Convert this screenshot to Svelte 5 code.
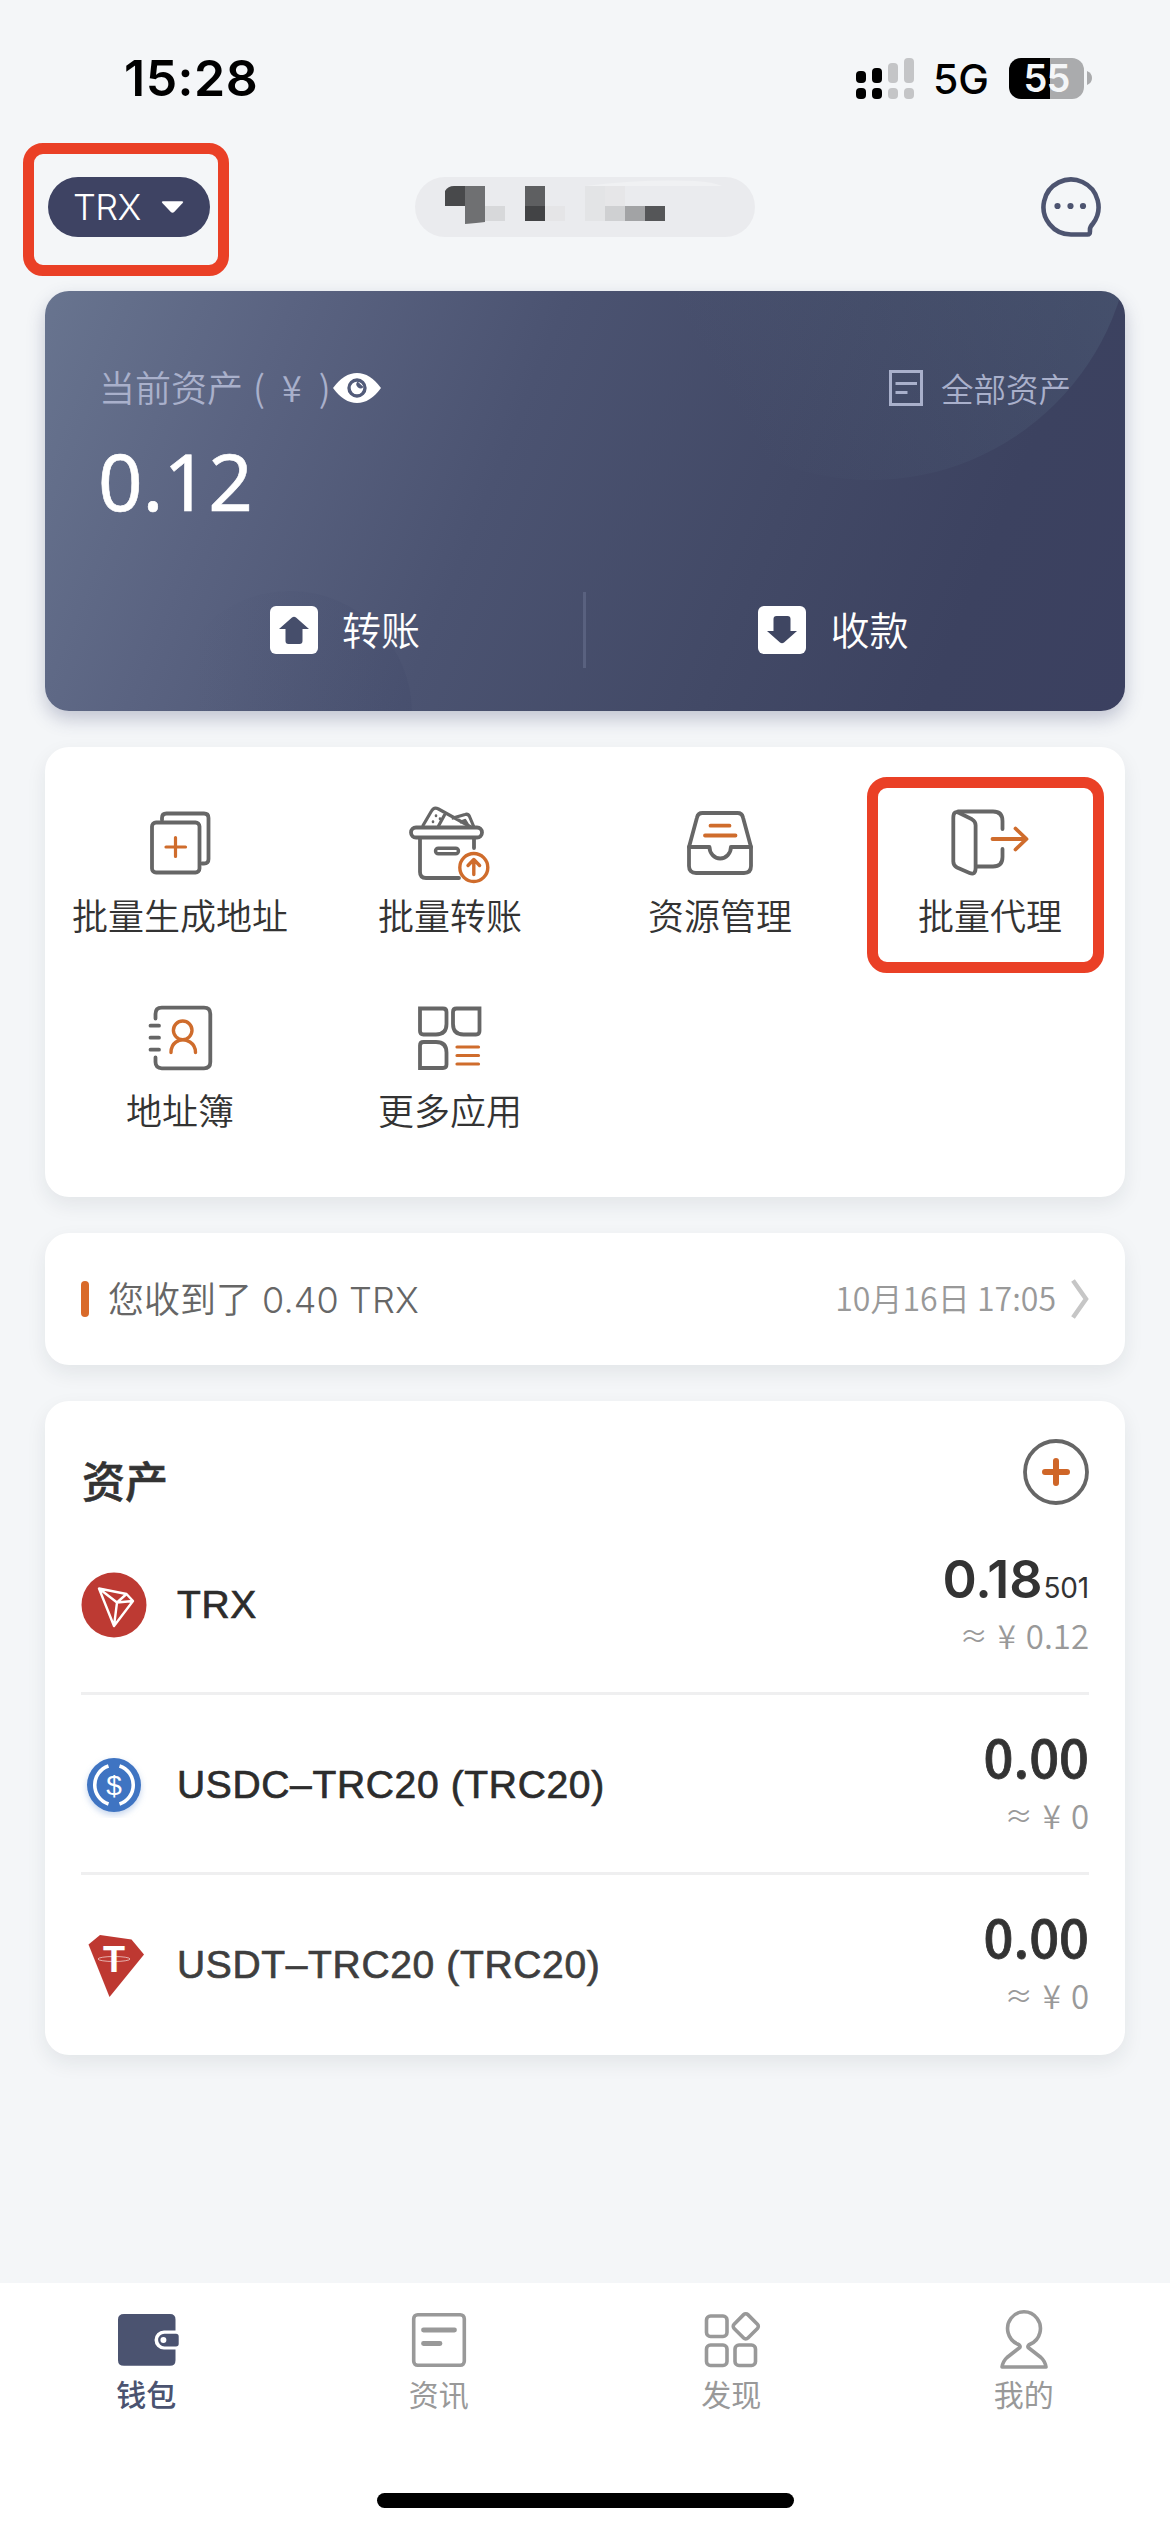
<script lang="ts">
	type Asset = { id: string; name: string; amount: string; rest: string; value: string };

	const tools = [
		{ id: 'generate', name: '批量生成地址' },
		{ id: 'transfer', name: '批量转账' },
		{ id: 'resource', name: '资源管理' },
		{ id: 'proxy', name: '批量代理', marked: true },
		{ id: 'contacts', name: '地址簿' },
		{ id: 'more', name: '更多应用' }
	];

	const assets: Asset[] = [
		{ id: 'trx', name: 'TRX', amount: '0.18', rest: '501', value: '0.12' },
		{ id: 'usdc', name: 'USDC–TRC20 (TRC20)', amount: '0.00', rest: '', value: '0' },
		{ id: 'usdt', name: 'USDT–TRC20 (TRC20)', amount: '0.00', rest: '', value: '0' }
	];

	const tabs = [
		{ id: 'wallet', name: '钱包' },
		{ id: 'news', name: '资讯' },
		{ id: 'discover', name: '发现' },
		{ id: 'mine', name: '我的' }
	];

	let active = $state('wallet');
</script>

<div class="screen">
	<div class="status">
		<span class="time">15:28</span>
		<div class="indicators">
			<svg class="signal" viewBox="0 0 58 41">
				<g fill="#000">
					<rect x="0" y="13" width="10" height="12" rx="4" />
					<rect x="16" y="10" width="10" height="15" rx="4" />
					<rect x="0" y="30" width="10" height="11" rx="4" />
					<rect x="16" y="30" width="10" height="11" rx="4" />
				</g>
				<g fill="#c4c5c7">
					<rect x="32" y="5" width="10" height="20" rx="4" />
					<rect x="48" y="0" width="10" height="25" rx="4" />
					<rect x="32" y="30" width="10" height="11" rx="4" />
					<rect x="48" y="30" width="10" height="11" rx="4" />
				</g>
			</svg>
			<span class="network">5G</span>
			<div class="battery">
				<span>55</span>
			</div>
			<svg class="tip" viewBox="0 0 5 14"><path d="M0 0q5 2 5 7t-5 7z" fill="#aaabad" /></svg>
		</div>
	</div>

	<header>
		<div class="chain">
			<span>TRX</span>
			<svg viewBox="0 0 24 14"><path d="M2 1h20q2 0 .6 1.800L14 12q-2 2-4 0L1.400 2.800Q0 1 2 1z" fill="#fff" /></svg>
			<i class="mark mark-chain"></i>
		</div>
		<div class="account">
			<svg viewBox="0 0 340 60">
				<path d="M170 9q60-7 110-5 18 1 27 5z" fill="#f0f1f3" />
				<path d="M30 29V14q3-5 9-5h11v20z" fill="#48494b" />
				<path d="M50 9h20v36q-8 1-20 2z" fill="#6f7072" />
				<rect x="70" y="29" width="20" height="15" fill="#d7d8da" />
				<rect x="110" y="9" width="20" height="20" fill="#5e5f61" />
				<rect x="110" y="29" width="20" height="15" fill="#424345" />
				<rect x="130" y="29" width="20" height="15" fill="#e5e5e7" />
				<rect x="170" y="9" width="20" height="35" fill="#e3e4e6" />
				<rect x="190" y="9" width="20" height="20" fill="#e6e6e8" />
				<rect x="190" y="29" width="20" height="15" fill="#cfd0d2" />
				<rect x="210" y="29" width="20" height="15" fill="#a2a3a5" />
				<rect x="230" y="29" width="20" height="15" fill="#555658" />
			</svg>
		</div>
		<svg class="chat" viewBox="0 0 60 60">
			<path
				d="M30 57.500A27.500 27.500 0 1 1 52 46.500Q48.500 50 49 54 49 57.500 46.500 57.500Z"
				fill="none"
				stroke="#4d5470"
				stroke-width="4.600"
			/>
			<g fill="#4d5470">
				<circle cx="16.500" cy="29" r="3.100" />
				<circle cx="29.500" cy="29" r="3.100" />
				<circle cx="42" cy="29" r="3.100" />
			</g>
		</svg>
	</header>

	<main>
		<section class="balance">
			<div class="balance-top">
				<span class="label">当前资产<b>(</b><b>¥</b><b>)</b></span>
				<svg class="eye" viewBox="0 0 48 30">
					<path d="M0 15Q11 0 24 0T48 15Q37 30 24 30T0 15z" fill="#fff" />
					<circle cx="24" cy="15" r="8" fill="#fff" stroke="#525b79" stroke-width="3.400" />
					<path d="M24.500 8.500a4 4 0 0 0 6 5.500" fill="#525b79" />
				</svg>
				<span class="all">
					<svg viewBox="0 0 34 36" fill="none" stroke="#a9b0cb" stroke-width="3">
						<path d="M1.500 1.500h31v33h-31zM6.500 13.500h21.500M6.500 22.500h12" />
					</svg>
					<span>全部资产</span>
				</span>
			</div>
			<div class="total">0.12</div>
			<div class="actions">
				<div class="action">
					<svg viewBox="0 0 48 48">
						<rect width="48" height="48" rx="6" fill="#fff" />
						<path d="M22 11.500q2-1.500 4 0L39 23h-6.500v12q0 3-3 3h-11q-3 0-3-3V23H9z" fill="#464e6b" />
					</svg>
					<span>转账</span>
				</div>
				<div class="action">
					<svg viewBox="0 0 48 48">
						<rect width="48" height="48" rx="6" fill="#fff" />
						<path d="M22 36.500q2 1.500 4 0L39 25h-6.500V13q0-3-3-3h-11q-3 0-3 3v12H9z" fill="#3f4662" />
					</svg>
					<span>收款</span>
				</div>
			</div>
		</section>

		<section class="card tools">
			{#each tools as tool (tool.id)}
				<div class="tool">
					<svg viewBox="0 0 90 90" fill="none" stroke="#666" stroke-width="3.800" stroke-linecap="round" stroke-linejoin="round">
						{#if tool.id === 'generate'}
							<rect x="17" y="24.500" width="47.500" height="50" rx="4" />
							<path d="M27 22v-2q0-4.500 4.500-4.500H69q4.500 0 4.500 4.500v41q0 4.500-4.500 4.500h-2" />
							<path d="M40.500 39.500v19M31 49h19.500" stroke="#cf6c2c" stroke-width="3.200" />
						{:else if tool.id === 'transfer'}
							<path d="M18 27.500 26.500 13q2.500-4.500 7-2L65 28.500M39.500 17 33.500 28M48 20l12-3.500q3-1 4.500 2L68.500 28M56 24l4-1.500 2.500 4" stroke-width="3.200" />
							<path d="M31 17.500v.5M28 23.500v.5M35 20.500v.500" stroke-width="2.600" />
							<rect x="6" y="29.500" width="71" height="10" rx="5" />
							<path d="M15 40v34q0 6 6 6h33M69 40v10" />
							<rect x="30.500" y="50.200" width="23" height="5.600" rx="2.800" stroke-width="3.400" />
							<g stroke="#cf6c2c" stroke-width="3.400">
								<circle cx="68.800" cy="69.500" r="14" />
								<path d="M68.800 76.500v-14M63 67.500l5.800-6 5.800 6" />
							</g>
						{:else if tool.id === 'resource'}
							<path d="M14 49 22 19.500Q23 15 27.500 15h35q4.500 0 5.500 4.500L76 49v19q0 7-7 7H21q-7 0-7-7z" />
							<path d="M14 49h20.500a10.700 11.500 0 0 0 21.400 0H76" />
							<path d="M35.500 27.700h19M30 37.500h30.500" stroke="#cf6c2c" />
						{:else if tool.id === 'proxy'}
							<path d="M8.300 20q0-8 6-5L27 21.300q3.600 2 3.600 6V70q0 7.500-6 5L12 69.500q-3.700-2-3.700-6z" />
							<path d="M13 13.500h35q9.500 0 9.500 9.500v8M57.500 51v8q0 9.500-9.500 9.500H32" />
							<path d="M47.500 41H81M70.500 30.500l11 10.500-11 10.500" stroke="#cf6c2c" />
						{:else if tool.id === 'contacts'}
							<path d="M20.500 25.500V21q0-6.300 6.300-6.300H69q6.300 0 6.300 6.300v48q0 6.300-6.300 6.300H26.800q-6.300 0-6.300-6.300v-4.500" />
							<path d="M15.500 32.700h8.500M15.500 44.700h8.500M15.500 56.700h8.500" />
							<g stroke="#cf6c2c" stroke-width="3.400">
								<circle cx="47.700" cy="37.300" r="9.300" />
								<path d="M36 59.500q0-7 5-10.500 6.700-4.500 14 0 5.500 3.500 5.500 10.500" />
							</g>
						{:else}
							<path stroke-linejoin="miter" d="M15 15.500h23q3.500 0 3.500 3.500v12Q41.500 41.500 31 41.500H18.500q-3.500 0-3.500-3.500z" />
							<path stroke-linejoin="miter" d="M74.500 15.500h-23q-3.500 0-3.500 3.500v12Q48 41.500 58.500 41.500H71q3.500 0 3.500-3.500z" />
							<path stroke-linejoin="miter" d="M15 75h23q3.500 0 3.500-3.500v-12Q41.500 49 31 49H18.500q-3.500 0-3.500 3.500z" />
							<path d="M52 54h21.500M52 62.500h21.500M52 71h21.500" stroke="#cf6c2c" stroke-width="3.200" />
						{/if}
					</svg>
					<span>{tool.name}</span>
					{#if tool.marked}<i class="mark mark-tool"></i>{/if}
				</div>
			{/each}
		</section>

		<section class="card notice">
			<i class="bar"></i>
			<span class="message">您收到了 <em>0.40 TRX</em></span>
			<span class="date">10月16日 17:05</span>
			<svg viewBox="0 0 18 40"><path d="M2 1.500 15 20 2 38.500" fill="none" stroke="#c6c6c6" stroke-width="4.500" /></svg>
		</section>

		<section class="card assets">
			<div class="assets-head">
				<h2>资产</h2>
				<svg viewBox="0 0 66 66" fill="none">
					<circle cx="33" cy="33" r="31" stroke="#666" stroke-width="3.800" />
					<path d="M33 22v22M22 33h22" stroke="#cf6628" stroke-width="6" stroke-linecap="round" />
				</svg>
			</div>
			{#each assets as asset (asset.id)}
				<div class="asset">
					<svg class="coin" viewBox="0 0 66 66">
						{#if asset.id === 'trx'}
							<circle cx="33" cy="33" r="32.500" fill="#bd3a33" />
							<path
								d="M18 16.500 45.500 22 52 29 33 54zM18 16.500l18 14L33 54M36 30.500 52 29M36 30.500 45.500 22"
								fill="none"
								stroke="#fff"
								stroke-width="2.400"
								stroke-linejoin="round"
							/>
						{:else if asset.id === 'usdc'}
							<circle class="glow" cx="33" cy="33" r="27" fill="#3f74c2" />
							<path d="M27.500 14a20 20 0 0 0 0 38M38.500 14a20 20 0 0 1 0 38" fill="none" stroke="#fff" stroke-width="3.600" />
							<text x="33" y="43" font-size="28">$</text>
						{:else}
							<g transform="translate(0 3)">
								<path d="M19 0 50.500 4.500 63 19.500 28.500 62 7.500 9.500z" fill="#be3831" />
								<ellipse cx="33" cy="24" rx="16" ry="2.500" fill="none" stroke="#fff" stroke-width=".6" />
								<text class="tether" x="33" y="37" font-size="36">T</text>
							</g>
						{/if}
					</svg>
					<span class="name" class:soft={asset.id === 'usdt'}>{asset.name}</span>
					<div class="worth">
						<div class="amount" class:split={asset.rest}>{asset.amount}{#if asset.rest}<small>{asset.rest}</small>{/if}</div>
						<div class="value"><i>≈</i><span>¥</span>{asset.value}</div>
					</div>
				</div>
			{/each}
		</section>
	</main>

	<nav>
		{#each tabs as tab (tab.id)}
			<button class:active={active === tab.id} onclick={() => (active = tab.id)}>
				<svg viewBox="0 0 66 66" fill="none" stroke="#999" stroke-width="3.600" stroke-linejoin="round">
					{#if tab.id === 'wallet'}
						<g stroke="none" fill="#4b5370">
							<path d="M11 7h46q5.500 0 5.500 5.500V23.500H51a9.500 9.500 0 0 0 0 19h11.500v10.700q0 5.500-5.500 5.500H11q-6 0-6-5.500V12.500Q5 7 11 7z" />
							<path fill-rule="evenodd" d="M51.500 26.700H63q2.700 0 2.700 2.700v7.400q0 2.700-2.700 2.700H51.500a6.400 6.400 0 0 1 0-12.800zM50.400 30a3 3 0 1 0 0 6 3 3 0 0 0 0-6z" />
						</g>
					{:else if tab.id === 'news'}
						<rect x="7.700" y="7.700" width="50.600" height="50.600" rx="4" />
						<path d="M17.500 23h31M17.500 36.500h16.500" stroke-width="4.800" stroke-linecap="round" />
					{:else if tab.id === 'discover'}
						<rect x="8.500" y="9" width="20.500" height="20.500" rx="4" />
						<rect x="8.500" y="38" width="20.500" height="20.500" rx="4" />
						<rect x="37" y="38" width="20.500" height="20.500" rx="4" />
						<rect x="38" y="9.500" width="19.500" height="19.500" rx="3" transform="rotate(45 47.700 19.300)" />
					{:else}
						<path d="M28.800 40.500Q30 38.500 26.500 37A16.400 16.800 0 1 1 39.500 37Q36 38.500 37.200 40.500L50 50.500q4 3.500 5 9.500H11q1-6 5-9.500z" />
					{/if}
				</svg>
				{tab.name}
			</button>
		{/each}
		<i class="home"></i>
	</nav>
</div>

<style>
	:global(body) {
		margin: 0;
		background: #f4f6f8;
	}

	.screen {
		width: 1170px;
		height: 2532px;
		display: flex;
		flex-direction: column;
		overflow: hidden;
		background: #f4f6f8;
		color: #333;
		font-family: 'Noto Sans CJK SC', sans-serif;
		font-weight: 350;
	}

	svg {
		display: block;
		flex: none;
	}

	.status {
		height: 156px;
		box-sizing: border-box;
		padding: 0 78px 0 124px;
		display: flex;
		align-items: center;
		justify-content: space-between;
		color: #000;
		font-family: Inter, sans-serif;
	}

	.time {
		font-size: 50px;
		font-weight: 600;
		letter-spacing: 0.5px;
	}

	.indicators {
		display: flex;
		align-items: center;
	}

	.signal {
		width: 58px;
		height: 41px;
		margin-right: 19px;
	}

	.network {
		width: 76px;
		font-size: 41px;
		font-weight: 450;
		margin-top: 2px;
	}

	.battery {
		width: 75px;
		height: 41px;
		border-radius: 12px;
		display: flex;
		align-items: center;
		justify-content: center;
		background: linear-gradient(90deg, #000 41px, #aaabad 41px);
		color: #f4f6f8;
		font-size: 38px;
		font-weight: 600;
		letter-spacing: -1px;
	}

	.tip {
		width: 5px;
		height: 14px;
		margin-left: 3px;
	}

	header {
		height: 135px;
		box-sizing: border-box;
		padding: 21px 0 0 48px;
		display: grid;
		grid-template-columns: 367px 626px 60px;
		justify-content: start;
		align-items: start;
	}

	.chain {
		position: relative;
		width: 162px;
		height: 60px;
		box-sizing: border-box;
		border-radius: 30px;
		padding: 0 26px 0 25px;
		display: flex;
		align-items: center;
		justify-content: space-between;
		background: #3e4363;
		color: #fff;
		font: 300 36px Inter, sans-serif;
		letter-spacing: -0.6px;
	}

	.chain svg {
		width: 23px;
		height: 14px;
	}

	.mark {
		position: absolute;
		border: 11px solid #ea4026;
		border-radius: 20px;
	}

	.mark-chain {
		inset: -34px -19px -39px -25px;
	}

	.mark-tool {
		inset: -18px 21px auto 12px;
		height: 174px;
	}

	.account {
		width: 340px;
		height: 60px;
		border-radius: 30px;
		background: #eaebee;
	}

	.chat {
		width: 60px;
		height: 60px;
	}

	main {
		flex: 1;
		padding: 0 45px;
		display: flex;
		flex-direction: column;
		gap: 36px;
	}

	.balance {
		position: relative;
		overflow: hidden;
		height: 420px;
		box-sizing: border-box;
		padding: 74px 44px 0 56px;
		border-radius: 24px;
		background: linear-gradient(112deg, #68748f 0%, #5a6381 20%, #4b5371 42%, #424966 66%, #3c4260 84%, #3b4060 100%);
		box-shadow: 0 8px 18px rgba(62, 70, 110, 0.28);
		color: #fff;
	}

	/* soft discs in the corners of the card */
	.balance::before,
	.balance::after {
		content: '';
		position: absolute;
		border-radius: 50%;
	}

	.balance::before {
		left: 565px;
		top: -333px;
		width: 522px;
		height: 522px;
		background: linear-gradient(60deg, transparent 20%, rgba(92, 116, 138, 0.32) 85%);
	}

	.balance::after {
		left: 123px;
		top: 300px;
		width: 244px;
		height: 244px;
		background: linear-gradient(90deg, transparent 10%, rgba(56, 64, 98, 0.16) 100%);
	}

	.balance > div {
		position: relative;
		z-index: 1;
	}

	.balance-top {
		height: 46px;
		display: flex;
		align-items: center;
		color: #a9b0cb;
	}

	.label {
		width: 234px;
		margin: -5px 0 0 -2px;
		display: flex;
		font-size: 36px;
		line-height: 46px;
		white-space: nowrap;
	}

	.label b {
		font-weight: inherit;
		margin-left: 17px;
	}

	.label b:first-child {
		margin-left: 10px;
	}

	.eye {
		width: 48px;
		height: 30px;
	}

	.all {
		margin-left: auto;
		margin-right: 10px;
		display: flex;
		align-items: center;
		gap: 18px;
		font-size: 32.5px;
		line-height: 46px;
	}

	.all span {
		margin-top: -1px;
	}

	.all svg {
		width: 34px;
		height: 36px;
	}

	.total {
		height: 116px;
		margin-left: -3px;
		font: 400 78px/140px 'Noto Sans', sans-serif;
		-webkit-text-stroke: 0.6px currentColor;
	}

	.actions {
		height: 76px;
		margin: 65px 0 0 6px;
		display: grid;
		grid-template-columns: 476px 1fr;
	}

	.action {
		display: flex;
		align-items: center;
		justify-content: center;
		gap: 24px;
		font-size: 39px;
		line-height: 50px;
	}

	.action span {
		margin-top: -5px;
	}

	.action + .action {
		border-left: 3px solid #59617f;
	}

	.action svg {
		width: 48px;
		height: 48px;
	}

	.card {
		background: #fff;
		border-radius: 24px;
		box-shadow: 0 8px 20px rgba(30, 35, 50, 0.08);
	}

	.tools {
		height: 450px;
		box-sizing: border-box;
		padding-top: 48px;
		display: grid;
		grid-template-columns: repeat(4, 270px);
		grid-auto-rows: 195px;
	}

	.tool {
		position: relative;
		display: flex;
		flex-direction: column;
		align-items: center;
		font-size: 36px;
		line-height: 50px;
	}

	.tool svg {
		width: 90px;
		height: 90px;
		margin: 3px 0 1px;
	}

	.notice {
		height: 132px;
		box-sizing: border-box;
		padding: 0 36px;
		display: flex;
		align-items: center;
		color: #666;
		font-size: 36px;
	}

	.bar {
		width: 8px;
		height: 36px;
		margin-right: 19px;
		border-radius: 4px;
		background: #d96a29;
	}

	.message,
	.date {
		margin-top: -4px;
	}

	.message em {
		margin-left: 2px;
		font-family: Inter, sans-serif;
		font-style: normal;
		font-weight: 300;
		letter-spacing: 0.1px;
	}

	.date {
		margin-left: auto;
		margin-right: 15px;
		color: #999;
		font-size: 32.1px;
	}

	.notice svg {
		width: 18px;
		height: 40px;
	}

	.assets {
		height: 654px;
		padding: 0 36px;
	}

	.assets-head {
		height: 114px;
		display: flex;
		align-items: center;
		justify-content: space-between;
	}

	h2 {
		margin: 41px 0 0 1px;
		font-size: 43px;
		line-height: 50px;
		font-weight: 500;
		-webkit-text-stroke: 0.6px currentColor;
	}

	.assets-head svg {
		width: 66px;
		height: 66px;
		margin-top: 28px;
	}

	.asset {
		height: 180px;
		box-shadow: inset 0 -3px #efeff0;
		display: flex;
		align-items: center;
	}

	.asset:last-child {
		box-shadow: none;
	}

	.coin {
		width: 66px;
		height: 66px;
		margin-right: 30px;
	}

	.coin text {
		fill: #fff;
		text-anchor: middle;
		font-family: 'Liberation Sans', sans-serif;
	}

	.coin .tether {
		font-weight: 700;
	}

	.glow {
		filter: drop-shadow(0 3px 3px rgba(63, 116, 194, 0.3));
	}

	.name {
		color: #2c2c2c;
		font-family: 'Liberation Sans', sans-serif;
		font-size: 39px;
		letter-spacing: 0.65px;
		-webkit-text-stroke: 0.7px currentColor;
	}

	.name.soft {
		color: #3e3e3e;
	}

	.worth {
		margin-left: auto;
		text-align: right;
	}

	.amount {
		height: 60px;
		line-height: 58px;
		font-size: 52.5px;
		font-weight: 500;
		-webkit-text-stroke: 0.8px currentColor;
	}

	.amount.split {
		font-family: Inter, sans-serif;
		font-size: 52px;
		line-height: 67px;
		font-weight: 600;
		letter-spacing: 0;
		-webkit-text-stroke: 0;
	}

	.amount small {
		font-size: 28px;
		font-weight: 400;
		letter-spacing: -0.2px;
		margin-left: 1px;
	}

	.value {
		height: 58px;
		display: flex;
		align-items: center;
		justify-content: flex-end;
		gap: 10px;
		color: #999;
		font-size: 33px;
		line-height: 60px;
	}

	.value i {
		font-size: 28px;
		font-style: normal;
	}

	nav {
		position: relative;
		height: 249px;
		display: grid;
		grid-template-columns: repeat(4, 1fr);
		align-items: start;
		background: #fff;
	}

	button {
		border: 0;
		padding: 24px 0 0;
		display: flex;
		flex-direction: column;
		align-items: center;
		background: none;
		color: #999;
		font: 400 30px/40px 'Noto Sans CJK SC', sans-serif;
	}

	button.active {
		color: #4b5370;
		font-weight: 500;
	}

	button svg {
		width: 66px;
		height: 66px;
	}

	.home {
		position: absolute;
		left: 377px;
		bottom: 24px;
		width: 417px;
		height: 15px;
		border-radius: 8px;
		background: #000;
	}
</style>
